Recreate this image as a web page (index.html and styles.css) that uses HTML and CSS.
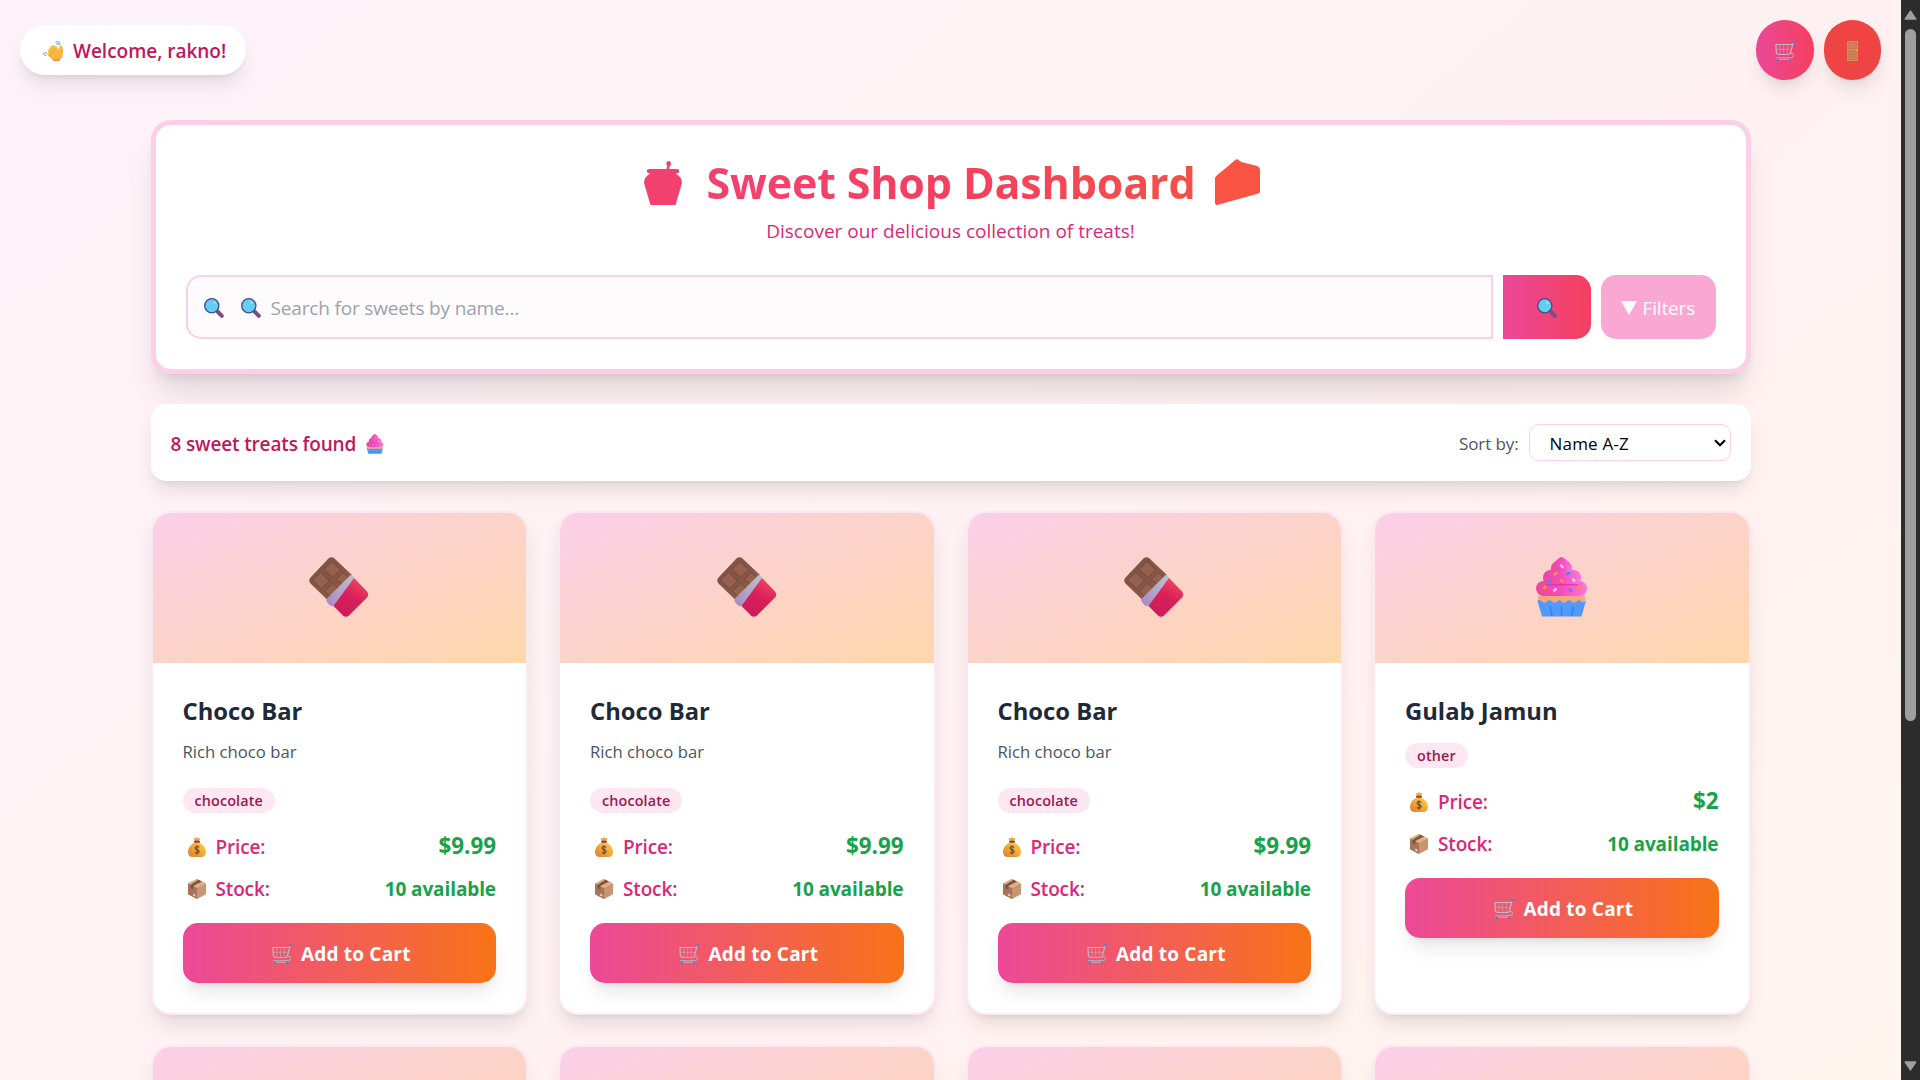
FILE: index.html
```
<!DOCTYPE html>
<html lang="en">
<head>
<meta charset="utf-8">
<title>Sweet Shop Dashboard</title>
<link rel="stylesheet" href="styles.css">
</head>
<body>
<svg class="sprite" aria-hidden="true">
  <defs>
    <linearGradient id="hand-fill" x1="0" y1="0" x2="1" y2="1"><stop offset="0" stop-color="#ffd23f"/><stop offset="1" stop-color="#f9a33c"/></linearGradient>
    <linearGradient id="choc-fill" x1="0" y1="0" x2="1" y2="1"><stop offset="0" stop-color="#7d5040"/><stop offset="1" stop-color="#8f5c4a"/></linearGradient>
    <linearGradient id="wrap-fill" x1=".8" y1="0" x2=".3" y2="1"><stop offset="0" stop-color="#f04a62"/><stop offset=".5" stop-color="#d81f5a"/><stop offset="1" stop-color="#cc1c58"/></linearGradient>
    <linearGradient id="foil-fill" x1="1" y1="0" x2="0" y2="1"><stop offset="0" stop-color="#bcc3cf"/><stop offset="1" stop-color="#a987c6"/></linearGradient>
    <linearGradient id="icing-fill" x1="0" y1="0" x2="1" y2="0"><stop offset="0" stop-color="#e8489a"/><stop offset=".5" stop-color="#f64cc0"/><stop offset="1" stop-color="#fb78da"/></linearGradient>
    <linearGradient id="bag-fill" x1="0" y1="1" x2="1" y2="0"><stop offset="0" stop-color="#e0792c"/><stop offset="1" stop-color="#ffd54a"/></linearGradient>
    <symbol id="wave" viewBox="0 0 20 20">
      <path d="M12.500 1.500l1.700-1q1.800 0 2.300 1.500l.3 1.800M13.200 3l1.200-.4q1 .2 1.100 1.400M.6 11.500l.5 2q.6 1.300 2.200 1.300M2.600 11l.5 1.500 1.400.5" fill="none" stroke="#4aa0dc" stroke-width="1"/>
      <path d="M5.600 9.300Q5.200 7.600 6.600 7.200 6.700 5.200 8.300 5.300 8.800 3.800 10.200 4.200L11.300 4.600Q12.500 4 13.400 5.200L15.600 8.200Q16.500 7.500 16.400 6 16.800 4.200 18.400 4.600 20 5.500 20 10.500 20.200 16 17 18.800 13.500 21.200 10 19L5.300 14.900Q4.500 13.600 5.600 12.500L4.900 11.300Q4.600 9.900 5.600 9.300Z" fill="url(#hand-fill)"/>
      <path d="M5.900 9.500l3.800 3.800M7.200 7.300l4.400 4.500M9 5.400l4.500 5M5.700 12.600l3 2.700" stroke="#dd952e" stroke-width=".7" fill="none"/>
      <path d="M10 19q3.500 2.200 7-.2" stroke="#e36b4f" stroke-width=".9" fill="none"/>
    </symbol>
    <symbol id="cart" viewBox="0 0 20 20">
      <path d="M1.300 8.300h15M5 3.500v9.500M8.700 3.500v9.500M12.400 3.500v9.500" fill="none" stroke="#b9b3ba" stroke-width=".6"/>
      <path d="M15.500 12.500q3-.8 3 1.800 0 2.300-2.300 2.400H1.300" fill="none" stroke="#b9b3ba" stroke-width="1"/>
      <path d="M17 3.500H.9L1.300 11q.3 2.500 2.700 2.500h9.500q1.500 0 2-1.800L18 2.200" fill="none" stroke="#c0bbc3" stroke-width="1.200"/>
      <path d="M1 18.300H17" stroke="#c7bfc8" stroke-width=".8"/>
      <circle cx="2.700" cy="18.700" r="1.200" fill="#3f7fc8"/><circle cx="15.300" cy="18.700" r="1.200" fill="#3f7fc8"/>
      <path d="M17.300 1.500L19.800.8" stroke="#3e86d3" stroke-width="1.800"/>
    </symbol>
    <symbol id="door" viewBox="0 0 11 20">
      <rect width="11" height="20" fill="#dc8a52"/>
      <path d="M1.500 1.500h8v6h-8zM1.500 10h8v3.500h-8zM1.500 15h8v3.500h-8z" fill="#cb835c" stroke="#b46c44" stroke-width=".5"/>
      <circle cx="9.500" cy="9" r=".9" fill="#ffb020"/>
    </symbol>
    <symbol id="magnifier" viewBox="0 0 20 20">
      <path d="M12.500 12.500l2 2" stroke="#5a4c82" stroke-width="1.500"/>
      <path d="M14 14l3.800 3.800" stroke="#7d4b85" stroke-width="4" stroke-linecap="round"/>
      <circle cx="7.800" cy="7.800" r="7.100" fill="#62cfee" stroke="#454b91" stroke-width="1.300"/>
      <circle cx="10.500" cy="4.600" r="1.200" fill="#a5e4f7"/>
    </symbol>
    <symbol id="pot" viewBox="0 0 38 44">
      <path d="M24.600 0a2.700 2.700 0 0 1 1.200 5L25.200 8H33q2.200 0 2.200 2.200T33 12.200L31.800 12.800Q38 16 38 22L31.500 44H6.500L0 22Q0 16 6 12.800L5 12.200Q2.800 12 2.800 10T5 8H22.500l.8-3.200A2.700 2.700 0 0 1 24.600 0Z" fill="#f2416f"/>
    </symbol>
    <symbol id="cake" viewBox="0 0 45 46">
      <path d="M20 1.200Q22-.8 24 1.500L27 3.300 41.500 6.800Q45 8.200 45 11V32.500Q45 34 43.500 34.500L3 45.700Q0 46.500 0 44V19.500Q0 18 1.200 17Z" fill="#f95443"/>
    </symbol>
    <symbol id="chocolate" viewBox="0 0 60 60">
      <path d="M19.500 1.500Q22.500-1 25.500 1.500L43 18 18 42.500 1.500 26.500Q-1 23.500 1.500 20.500Z" fill="url(#choc-fill)"/>
      <g fill="#95604e" stroke="#6e4035" stroke-width=".7" stroke-linejoin="round">
        <path d="M22.800 4.500L31.500 12.500 24 20.500 15 12.500Z"/><path d="M11.500 15.500L20.500 23.500 12.500 31.500 3.500 23.500Z"/><path d="M34 15.500L40.500 21 34.500 27.500 27 23Z"/><path d="M23.500 26.500L29.500 32 21.500 40 15.500 34Z"/>
      </g>
      <path d="M41 18.500Q42.500 17 45 20.500V23L27 47.500Q23.500 50.500 20.500 48L17.500 44.500Q16.500 42.500 18 41.500Z" fill="url(#foil-fill)"/>
      <path d="M45 21L58 34.500Q60.500 37.500 58 40.500L40 58.500Q37 61 34 58.500L24.500 49Z" fill="url(#wrap-fill)"/>
    </symbol>
    <symbol id="cupcake" viewBox="0 0 52 60">
      <path d="M2.500 38.500H48.500Q50 42 47 47H4.500Q1 42 2.500 38.500Z" fill="#fba678"/>
      <path d="M1.300 43.500Q4 42 6 44.500T11 44.500 16 44.500 21 44.500 25.500 44.500 30.500 44.500 35.500 44.500 40.500 44.500 45 44.500 50 43.500L45.500 59.500H6Z" fill="#5199fc"/>
      <path d="M14 49.500L16 59M25.500 49.500V59M37.500 49.500L35.500 59" stroke="#2388ff" stroke-width="1.500"/>
      <rect x="0" y="24" width="51" height="15" rx="7.500" fill="url(#icing-fill)"/>
      <rect x="7" y="13" width="38" height="15.500" rx="7.500" fill="url(#icing-fill)"/>
      <path d="M10 27.800H42" stroke="#d8329f" stroke-width="1"/>
      <path d="M22.500 1.500Q25.500-1.500 28.500 1.500L33.500 5.500Q37 9 36 13 34 17 25.500 17T15 13Q14.500 8 18 5.500Z" fill="url(#icing-fill)"/>
      <g stroke-width="2.400" stroke-linecap="round">
        <path d="M25 8.500l1.500 1.500M37 22.500l1.300 1.200M18.300 33.500l1.500-1.300" stroke="#f3d5fb"/>
        <path d="M18.700 17.500l1.700-1.500M25 23.500l1.500 1M8 31l1.500-1.300M42 31l1.500-1.300" stroke="#fb9a2c"/>
        <path d="M31.300 17l1.700-1.300M12.500 24.500l2 .3M33.700 32.500l1.500 1.300" stroke="#3d8bf5"/>
      </g>
    </symbol>
    <symbol id="moneybag" viewBox="0 0 18 20">
      <path d="M5.500.8L7.500 1.500 9 0 10.500 1.500 12.500.8 11.200 4H6.800Z" fill="#f0a53a"/>
      <path d="M6.500 5.500Q0 9.500 0 14.500 0 20 5 20h8q5 0 5-5.500 0-5-6.500-9Z" fill="url(#bag-fill)"/>
      <rect x="6" y="3.800" width="6" height="2" rx="1" fill="#7a4633"/>
      <path d="M11.300 10.300Q9 8.800 7.300 10.200 6.500 12 9 12.800T11 15.300Q9.200 16.900 6.800 15.500M9 8.300v9.300" fill="none" stroke="#6b482c" stroke-width="1.100"/>
    </symbol>
    <symbol id="box" viewBox="0 0 18 20">
      <path d="M9 0L18 4.500V15.300L9 20 0 15.300V4.500Z" fill="#c99570"/>
      <path d="M0 4.500L9 9V20L0 15.300Z" fill="#a87458"/>
      <path d="M9 0L18 4.500 9 9 0 4.500Z" fill="#deb088"/>
      <path d="M10.500.8L14 2.500 5.300 7V10.500L2.500 9V5.700Z" fill="#80533f"/>
      <path d="M5.300 14.500l2 1v2.200l-2-1z" fill="#e6d3ee"/>
    </symbol>
  </defs>
</svg>

<div class="window">
  <div class="page">
    <div class="page-body">
      <header class="topbar">
        <div class="welcome"><svg class="icon"><use href="#wave"/></svg><span>Welcome, rakno!</span></div>
        <div class="topbar-actions">
          <button class="round-btn cart-btn"><svg class="icon"><use href="#cart"/></svg></button>
          <button class="round-btn exit-btn"><svg class="icon-door"><use href="#door"/></svg></button>
        </div>
      </header>

      <main class="container">
        <section class="hero">
          <div class="hero-title">
            <svg class="icon-pot"><use href="#pot"/></svg>
            <h1>Sweet Shop Dashboard</h1>
            <svg class="icon-cake"><use href="#cake"/></svg>
          </div>
          <p class="hero-sub">Discover our delicious collection of treats!</p>
          <div class="search-row">
            <div class="search-field">
              <svg class="icon"><use href="#magnifier"/></svg>
              <svg class="icon"><use href="#magnifier"/></svg>
              <span class="placeholder">Search for sweets by name...</span>
            </div>
            <button class="search-btn"><svg class="icon"><use href="#magnifier"/></svg></button>
            <button class="filter-btn"><svg class="tri" viewBox="0 0 16 14"><path d="M0 0H16L8 14Z" fill="#fff"/></svg><span>Filters</span></button>
          </div>
        </section>

        <section class="results">
          <div class="found"><span>8 sweet treats found</span><svg class="icon-cup-small"><use href="#cupcake"/></svg></div>
          <div class="sort">
            <span class="sort-label">Sort by:</span>
            <div class="select"><span>Name A-Z</span><svg class="chevron" viewBox="0 0 12 8"><path d="M1 1.300L6 6.300 11 1.300" fill="none" stroke="#000" stroke-width="2.200"/></svg></div>
          </div>
        </section>

        <section class="grid">
          <article class="card">
            <div class="thumb"><svg class="art"><use href="#chocolate"/></svg></div>
            <div class="info">
              <h2>Choco Bar</h2>
              <p class="desc">Rich choco bar</p>
              <span class="badge">chocolate</span>
              <div class="line"><span class="label"><svg class="icon-bag"><use href="#moneybag"/></svg>Price:</span><span class="price">$9.99</span></div>
              <div class="line"><span class="label"><svg class="icon-bag"><use href="#box"/></svg>Stock:</span><span class="stock">10 available</span></div>
              <button class="add"><svg class="icon"><use href="#cart"/></svg><span>Add to Cart</span></button>
            </div>
          </article>
          <article class="card">
            <div class="thumb"><svg class="art"><use href="#chocolate"/></svg></div>
            <div class="info">
              <h2>Choco Bar</h2>
              <p class="desc">Rich choco bar</p>
              <span class="badge">chocolate</span>
              <div class="line"><span class="label"><svg class="icon-bag"><use href="#moneybag"/></svg>Price:</span><span class="price">$9.99</span></div>
              <div class="line"><span class="label"><svg class="icon-bag"><use href="#box"/></svg>Stock:</span><span class="stock">10 available</span></div>
              <button class="add"><svg class="icon"><use href="#cart"/></svg><span>Add to Cart</span></button>
            </div>
          </article>
          <article class="card">
            <div class="thumb"><svg class="art"><use href="#chocolate"/></svg></div>
            <div class="info">
              <h2>Choco Bar</h2>
              <p class="desc">Rich choco bar</p>
              <span class="badge">chocolate</span>
              <div class="line"><span class="label"><svg class="icon-bag"><use href="#moneybag"/></svg>Price:</span><span class="price">$9.99</span></div>
              <div class="line"><span class="label"><svg class="icon-bag"><use href="#box"/></svg>Stock:</span><span class="stock">10 available</span></div>
              <button class="add"><svg class="icon"><use href="#cart"/></svg><span>Add to Cart</span></button>
            </div>
          </article>
          <article class="card">
            <div class="thumb"><svg class="art art-cup"><use href="#cupcake"/></svg></div>
            <div class="info">
              <h2>Gulab Jamun</h2>
              <span class="badge">other</span>
              <div class="line"><span class="label"><svg class="icon-bag"><use href="#moneybag"/></svg>Price:</span><span class="price">$2</span></div>
              <div class="line"><span class="label"><svg class="icon-bag"><use href="#box"/></svg>Stock:</span><span class="stock">10 available</span></div>
              <button class="add"><svg class="icon"><use href="#cart"/></svg><span>Add to Cart</span></button>
            </div>
          </article>
          <article class="card"><div class="thumb"></div></article>
          <article class="card"><div class="thumb"></div></article>
          <article class="card"><div class="thumb"></div></article>
          <article class="card"><div class="thumb"></div></article>
        </section>
      </main>
    </div>
  </div>
  <div class="scrollbar">
    <svg class="scroll-arrow" viewBox="0 0 13 10"><path d="M6.500 1.200L11.700 9H1.300Z" fill="#9f9f9f" stroke="#9f9f9f" stroke-width="1.500" stroke-linejoin="round"/></svg>
    <div class="scroll-track"><div class="scroll-thumb"></div></div>
    <svg class="scroll-arrow" viewBox="0 0 13 10"><path d="M6.500 8.800L11.700 1H1.300Z" fill="#9f9f9f" stroke="#9f9f9f" stroke-width="1.500" stroke-linejoin="round"/></svg>
  </div>
</div>
</body>
</html>
```
FILE: styles.css
```
* { box-sizing: border-box; margin: 0; padding: 0; }

body {
  font-family: "Open Sans", "Noto Sans", sans-serif;
  font-size: 19px;
  color: #1f2937;
  overflow: hidden;
}
button { font: inherit; color: inherit; border: 0; background: none; }
svg { display: block; flex: none; }
span, h1, h2, p { white-space: nowrap; }

.sprite { position: absolute; width: 0; height: 0; }
.icon { width: 20px; height: 20px; }
.icon-door { width: 11px; height: 20px; }

.window { display: flex; height: 100vh; }
.page { flex: 1; overflow: hidden; }
.page-body {
  min-height: 1595px;
  background: linear-gradient(to bottom right, #fdf2f8, #fff1f2, #fff7ed);
}

/* Top bar */
.topbar {
  display: flex;
  justify-content: space-between;
  align-items: center;
  height: 100px;
  padding: 0 20px;
}
.welcome {
  display: flex;
  align-items: center;
  gap: 10px;
  width: 226px;
  height: 50px;
  padding: 2px 0 0 23px;
  border-radius: 25px;
  background: #fff;
  color: #be185d;
  font-weight: 580;
  letter-spacing: -.02px;
  box-shadow: 0 12.5px 19px -4px rgba(0,0,0,.1), 0 5px 7.500px -5px rgba(0,0,0,.1);
}
.topbar-actions { display: flex; gap: 10px; }
.round-btn {
  display: flex;
  align-items: center;
  justify-content: center;
  width: 57.500px;
  height: 60px;
  border-radius: 30px;
  padding-top: 2px;
  box-shadow: 0 12.500px 19px -4px rgba(0,0,0,.1), 0 5px 7.500px -5px rgba(0,0,0,.1);
}
.cart-btn { background: linear-gradient(to right, #ec4899, #f43f5e); }
.exit-btn { background: #ef4444; }

.container { width: 1600px; margin: 20px auto 0; }

/* Header card */
.hero {
  height: 254px;
  padding: 30px;
  border: 5px solid #fbcfe8;
  border-radius: 20px;
  background: #fff;
  box-shadow: 0 25px 31px -6px rgba(0,0,0,.1), 0 10px 12.500px -7.500px rgba(0,0,0,.1);
}
.hero-title { display: flex; justify-content: center; height: 50px; padding-left: 3px; }
.hero-title h1 {
  margin: 0 20px 0 25px;
  font-size: 43px;
  line-height: 56px;
  height: 60px;
  letter-spacing: -.16px;
  font-weight: 700;
  background: linear-gradient(to right, #ec4899, #f43f5e, #f97316) center / 1530px 100%;
  -webkit-background-clip: text;
  background-clip: text;
  color: transparent;
}
.icon-pot { width: 38px; height: 44px; margin-top: 6px; }
.icon-cake { width: 45px; height: 46px; margin-top: 4px; }
.hero-sub {
  margin: 10px 0 30px;
  height: 30px;
  line-height: 32px;
  text-align: center;
  color: #db2777;
}
.search-row { display: flex; gap: 10px; height: 64px; }
.search-field {
  display: flex;
  align-items: center;
  gap: 17px;
  flex: 1;
  padding: 2px 0 0 16px;
  border: 2px solid #fbcfe8;
  border-radius: 15px 0 0 15px;
  background: #fdfbfc;
}
.placeholder { margin-left: -7px; color: #9ca3af; letter-spacing: -.16px; }
.search-btn {
  display: flex;
  align-items: center;
  justify-content: center;
  width: 88px;
  padding-top: 2px;
  border-radius: 0 15px 15px 0;
  background: linear-gradient(to right, #ec4899, #f43f5e);
}
.filter-btn {
  display: flex;
  align-items: center;
  gap: 6px;
  width: 115px;
  padding: 2px 0 0 20px;
  border-radius: 15px;
  background: #f9a8d4;
  color: #fff;
}
.filter-btn span { letter-spacing: -.15px; }
.tri { width: 16px; height: 14px; }

/* Results bar */
.results {
  display: flex;
  justify-content: space-between;
  align-items: center;
  height: 77px;
  margin: 30px 0;
  padding: 0 20px;
  border-radius: 15px;
  background: #fff;
  box-shadow: 0 12.500px 19px -4px rgba(0,0,0,.1), 0 5px 7.500px -5px rgba(0,0,0,.1);
}
.found { display: flex; align-items: center; gap: 10px; color: #be185d; font-weight: 580; letter-spacing: -.15px; }
.found span { padding-top: 2px; }
.icon-cup-small { width: 18px; height: 20px; margin-top: 3px; }
.sort { display: flex; align-items: center; gap: 10px; font-size: 17px; }
.sort-label { color: #4b5563; padding-top: 1px; letter-spacing: -.1px; }
.select {
  display: flex;
  align-items: center;
  justify-content: space-between;
  width: 202px;
  height: 37px;
  padding: 2px 4px 0 20px;
  border: 1px solid #fbcfe8;
  border-radius: 10px;
  color: #000;
  letter-spacing: .2px;
}
.chevron { width: 12px; height: 8px; margin-top: -2px; }

/* Product cards */
.grid { display: grid; grid-template-columns: repeat(4, 1fr); gap: 30px; }
.card {
  min-height: 504px;
  border: 2px solid #fce7f3;
  border-radius: 20px;
  background: #fff;
  overflow: hidden;
  box-shadow: 0 12.500px 19px -4px rgba(0,0,0,.1), 0 5px 7.500px -5px rgba(0,0,0,.1);
}
.thumb {
  display: flex;
  align-items: center;
  justify-content: center;
  height: 150px;
  background: linear-gradient(to bottom right, #fbcfe8, #fed7aa);
}
.art { width: 60px; height: 60px; margin-top: -2px; }
.art-cup { width: 52px; }
.info { display: flex; flex-direction: column; align-items: flex-start; padding: 30px; }
.info h2 { height: 35px; margin-bottom: 10px; font-size: 23.800px; line-height: 37px; font-weight: 700; }
.desc { height: 25px; margin-bottom: 20px; font-size: 16.700px; line-height: 28px; color: #4b5563; }
.badge {
  height: 25px;
  margin: 5px 0 12px;
  padding: 0 12px;
  border-radius: 13px;
  background: #fce7f3;
  color: #9d174d;
  font-size: 14.400px;
  line-height: 25px;
  font-weight: 550;
  letter-spacing: .12px;
}
.line { display: flex; align-items: center; justify-content: space-between; align-self: stretch; height: 42px; padding-top: 2px; }
.label { display: flex; align-items: center; gap: 10px; padding-left: 5px; color: #db2777; font-weight: 580; letter-spacing: -.15px; }
.icon-bag { width: 18px; height: 20px; }
.price { margin-top: -3px; font-size: 22.400px; font-weight: 700; color: #16a34a; }
.stock { font-weight: 700; color: #16a34a; letter-spacing: -.1px; }
.add {
  display: flex;
  align-items: center;
  justify-content: center;
  gap: 9px;
  align-self: stretch;
  height: 60px;
  margin-top: 14px;
  padding: 2px 0 0 4px;
  border-radius: 15px;
  background: linear-gradient(to right, #ec4899, #f97316);
  color: #fff;
  font-weight: 700;
  letter-spacing: .2px;
  box-shadow: 0 12.500px 19px -4px rgba(0,0,0,.1), 0 5px 7.500px -5px rgba(0,0,0,.1);
}

/* Scrollbar */
.scrollbar {
  display: flex;
  flex-direction: column;
  align-items: center;
  width: 19px;
  padding: 10px 0 9px;
  background: #2c2c2c;
}
.scroll-arrow { width: 13px; height: 10px; }
.scroll-track { flex: 1; padding-top: 9px; }
.scroll-thumb { width: 11px; height: 692px; border-radius: 6px; background: #9f9f9f; }
```
